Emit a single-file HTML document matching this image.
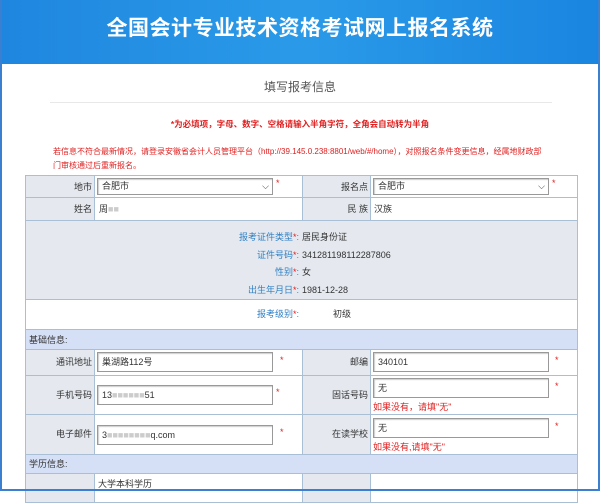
<!DOCTYPE html>
<html><head><meta charset="utf-8"><style>
*{margin:0;padding:0;box-sizing:border-box}
body{width:600px;height:491px;overflow:hidden;background:#fff;font-family:"Liberation Sans","Noto Sans CJK SC",sans-serif;font-size:9px;color:#333;position:relative}
.frame{position:absolute;left:0;top:0;width:600px;height:491px;border:2px solid #3a7fd0;border-top:none}
.hdr{position:absolute;left:0;top:0;width:600px;height:64px;background:linear-gradient(90deg,#1f86df,#2a9ae8 50%,#1a85e0);color:#fff;font-weight:bold;font-size:21px;text-align:center;line-height:58px;letter-spacing:0.5px}
.a{position:absolute}
.c{position:absolute;border:1px solid #a9bfd6}
.g{background:#e5e9ef}
.w{background:#fff}
.s{background:#d5dff5}
.lbl{text-align:right;padding-right:2px}
.inp{position:absolute;border:1px solid #999;background:#fff;height:20px;line-height:18px;padding-left:4px;font-size:9px;box-shadow:inset 1px 1px 1px #ccc}
.r{color:#e02020}
.blue{color:#2f7fc4}
</style></head><body>
<div class="hdr">全国会计专业技术资格考试网上报名系统</div>
<div class="a" style="left:0;top:78px;width:600px;text-align:center;font-size:12px;color:#555">填写报考信息</div>
<div class="a" style="left:50px;top:102px;width:502px;height:1px;background:#e8e8e8"></div>
<div class="a r" style="left:0;top:118px;width:600px;text-align:center;font-size:8.5px;font-weight:bold">*为必填项，字母、数字、空格请输入半角字符，全角会自动转为半角</div>
<div class="a r" style="left:53px;top:145px;font-size:8px;line-height:14px;white-space:nowrap">若信息不符合最新情况，请登录安徽省会计人员管理平台（http://39.145.0.238:8801/web/#/home），对照报名条件变更信息，经属地财政部<br>门审核通过后重新报名。</div>

<div class="c g lbl" style="left:25px;top:175px;width:70px;height:23px;line-height:22px">地市</div>
<div class="c w" style="left:94px;top:175px;width:209px;height:23px"></div>
<div class="inp" style="left:97px;top:178px;width:176px;height:17px;line-height:15px">合肥市<span style="position:absolute;right:3px;top:0">⌵</span></div>
<div class="a r" style="left:276px;top:178px">*</div>
<div class="c g lbl" style="left:302px;top:175px;width:69px;height:23px;line-height:22px">报名点</div>
<div class="c w" style="left:370px;top:175px;width:208px;height:23px"></div>
<div class="inp" style="left:373px;top:178px;width:176px;height:17px;line-height:15px">合肥市<span style="position:absolute;right:3px;top:0">⌵</span></div>
<div class="a r" style="left:552px;top:178px">*</div>

<div class="c g lbl" style="left:25px;top:197px;width:70px;height:24px;line-height:23px">姓名</div>
<div class="c w" style="left:94px;top:197px;width:209px;height:24px;line-height:23px;padding-left:4px">周<span style="color:#ccc">■■</span></div>
<div class="c g lbl" style="left:302px;top:197px;width:69px;height:24px;line-height:23px">民 族</div>
<div class="c w" style="left:370px;top:197px;width:208px;height:24px;line-height:23px;padding-left:3px">汉族</div>

<div class="c g" style="left:25px;top:220px;width:553px;height:80px"></div>
<div class="a" style="left:0;top:229px;width:600px;line-height:17.5px">
<div style="display:flex"><div style="width:299px;text-align:right" class="blue">报考证件类型<span class="r">*</span>:</div><div style="padding-left:3px">居民身份证</div></div>
<div style="display:flex"><div style="width:299px;text-align:right" class="blue">证件号码<span class="r">*</span>:</div><div style="padding-left:3px">341281198112287806</div></div>
<div style="display:flex"><div style="width:299px;text-align:right" class="blue">性别<span class="r">*</span>:</div><div style="padding-left:3px">女</div></div>
<div style="display:flex"><div style="width:299px;text-align:right" class="blue">出生年月日<span class="r">*</span>:</div><div style="padding-left:3px">1981-12-28</div></div>
</div>
<div class="c w" style="left:25px;top:299px;width:553px;height:31px"></div>
<div class="a" style="left:0;top:307px;width:600px;display:flex"><div style="width:299px;text-align:right" class="blue">报考级别<span class="r">*</span>:</div><div style="padding-left:34px">初级</div></div>

<div class="c s" style="left:25px;top:329px;width:553px;height:21px;line-height:20px;padding-left:3px">基础信息:</div>
<div class="c g lbl" style="left:25px;top:349px;width:70px;height:27px;line-height:25px">通讯地址</div>
<div class="c w" style="left:94px;top:349px;width:209px;height:27px"></div>
<div class="inp" style="left:97px;top:352px;width:176px">巢湖路112号</div>
<div class="a r" style="left:280px;top:355px">*</div>
<div class="c g lbl" style="left:302px;top:349px;width:69px;height:27px;line-height:25px">邮编</div>
<div class="c w" style="left:370px;top:349px;width:208px;height:27px"></div>
<div class="inp" style="left:373px;top:352px;width:176px">340101</div>
<div class="a r" style="left:555px;top:355px">*</div>

<div class="c g lbl" style="left:25px;top:375px;width:70px;height:40px;line-height:38px">手机号码</div>
<div class="c w" style="left:94px;top:375px;width:209px;height:40px"></div>
<div class="inp" style="left:97px;top:385px;width:176px">13<span style="color:#ccc">■■■■■■</span>51</div>
<div class="a r" style="left:276px;top:387px">*</div>
<div class="c g lbl" style="left:302px;top:375px;width:69px;height:40px;line-height:38px">固话号码</div>
<div class="c w" style="left:370px;top:375px;width:208px;height:40px"></div>
<div class="inp" style="left:373px;top:378px;width:176px">无</div>
<div class="a r" style="left:555px;top:381px">*</div>
<div class="a r" style="left:373px;top:400px">如果没有，请填"无"</div>

<div class="c g lbl" style="left:25px;top:414px;width:70px;height:41px;line-height:39px">电子邮件</div>
<div class="c w" style="left:94px;top:414px;width:209px;height:41px"></div>
<div class="inp" style="left:97px;top:425px;width:176px">3<span style="color:#ccc">■■■■■■■■</span>q.com</div>
<div class="a r" style="left:280px;top:427px">*</div>
<div class="c g lbl" style="left:302px;top:414px;width:69px;height:41px;line-height:39px">在读学校</div>
<div class="c w" style="left:370px;top:414px;width:208px;height:41px"></div>
<div class="inp" style="left:373px;top:418px;width:176px">无</div>
<div class="a r" style="left:555px;top:421px">*</div>
<div class="a r" style="left:373px;top:440px">如果没有,请填"无"</div>

<div class="c s" style="left:25px;top:454px;width:553px;height:20px;line-height:19px;padding-left:3px">学历信息:</div>
<div class="c g" style="left:25px;top:473px;width:70px;height:30px"></div>
<div class="c w" style="left:94px;top:473px;width:209px;height:30px;padding:3px 0 0 3px">大学本科学历</div>
<div class="c g" style="left:302px;top:473px;width:69px;height:30px"></div>
<div class="c w" style="left:370px;top:473px;width:208px;height:30px"></div>
<div class="frame"></div>
</body></html>
